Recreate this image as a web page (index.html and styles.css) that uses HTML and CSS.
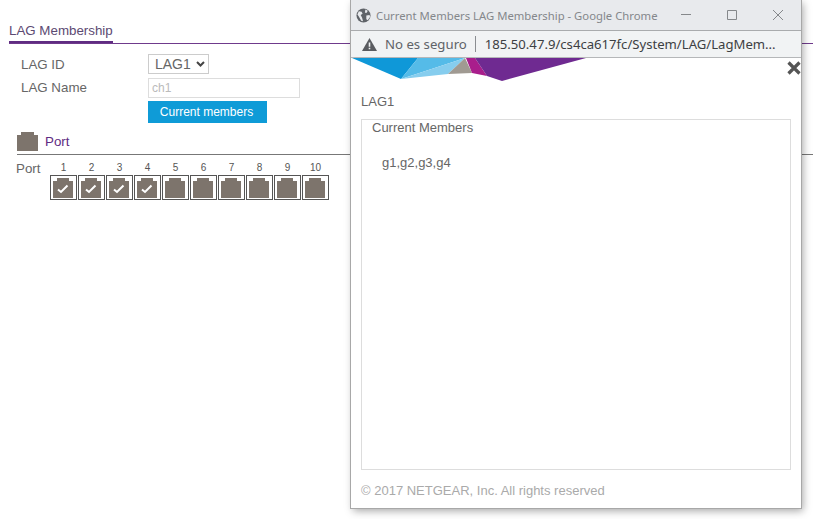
FILE: index.html
```html
<!DOCTYPE html>
<html lang="es">
<head>
<meta charset="utf-8">
<title>LAG Membership</title>
<link rel="stylesheet" href="styles.css">
</head>
<body>
<main class="page">
  <div class="tabbar"><span class="tab">LAG Membership</span></div>
  <div class="form">
    <div class="row row-id">
      <span class="label">LAG ID</span>
      <span class="select">LAG1<svg class="chev" viewBox="0 0 9 6" width="9" height="6"><path d="M1 1l3.500 3.500L8 1" fill="none" stroke="#444" stroke-width="2"/></svg></span>
    </div>
    <div class="row row-name">
      <span class="label">LAG Name</span>
      <span class="input">ch1</span>
    </div>
    <div class="row row-btn">
      <span class="label"></span>
      <span class="button">Current members</span>
    </div>
  </div>
  <div class="section">
    <svg class="port-icon-big" viewBox="0 0 21 19" width="21" height="19"><path d="M0 3h4V0h13v3h4v16H0z" fill="#7d746c"/></svg>
    <span class="section-title">Port</span>
  </div>
  <div class="ports">
    <span class="ports-label">Port</span>
    <div class="port"><span class="num">1</span><span class="box"><svg viewBox="0 0 20 20" width="20" height="20"><path d="M0 3h4V0h12v3h4v17H0z" fill="#7d746c"/><path d="M5 11.500l3 2.500 6.500-6.500" fill="none" stroke="#fff" stroke-width="2"/></svg></span></div>
    <div class="port"><span class="num">2</span><span class="box"><svg viewBox="0 0 20 20" width="20" height="20"><path d="M0 3h4V0h12v3h4v17H0z" fill="#7d746c"/><path d="M5 11.500l3 2.500 6.500-6.500" fill="none" stroke="#fff" stroke-width="2"/></svg></span></div>
    <div class="port"><span class="num">3</span><span class="box"><svg viewBox="0 0 20 20" width="20" height="20"><path d="M0 3h4V0h12v3h4v17H0z" fill="#7d746c"/><path d="M5 11.500l3 2.500 6.500-6.500" fill="none" stroke="#fff" stroke-width="2"/></svg></span></div>
    <div class="port"><span class="num">4</span><span class="box"><svg viewBox="0 0 20 20" width="20" height="20"><path d="M0 3h4V0h12v3h4v17H0z" fill="#7d746c"/><path d="M5 11.500l3 2.500 6.500-6.500" fill="none" stroke="#fff" stroke-width="2"/></svg></span></div>
    <div class="port"><span class="num">5</span><span class="box"><svg viewBox="0 0 20 20" width="20" height="20"><path d="M0 3h4V0h12v3h4v17H0z" fill="#7d746c"/></svg></span></div>
    <div class="port"><span class="num">6</span><span class="box"><svg viewBox="0 0 20 20" width="20" height="20"><path d="M0 3h4V0h12v3h4v17H0z" fill="#7d746c"/></svg></span></div>
    <div class="port"><span class="num">7</span><span class="box"><svg viewBox="0 0 20 20" width="20" height="20"><path d="M0 3h4V0h12v3h4v17H0z" fill="#7d746c"/></svg></span></div>
    <div class="port"><span class="num">8</span><span class="box"><svg viewBox="0 0 20 20" width="20" height="20"><path d="M0 3h4V0h12v3h4v17H0z" fill="#7d746c"/></svg></span></div>
    <div class="port"><span class="num">9</span><span class="box"><svg viewBox="0 0 20 20" width="20" height="20"><path d="M0 3h4V0h12v3h4v17H0z" fill="#7d746c"/></svg></span></div>
    <div class="port"><span class="num">10</span><span class="box"><svg viewBox="0 0 20 20" width="20" height="20"><path d="M0 3h4V0h12v3h4v17H0z" fill="#7d746c"/></svg></span></div>
  </div>
</main>

<section class="popup">
  <header class="titlebar">
    <svg class="globe" viewBox="0 0 16 16" width="15" height="15"><circle cx="8" cy="8" r="7.500" fill="#5f6368"/><path d="M3 3.500l3 .5 1 2-2 1.500 1.500 3 1 3.500-2-.5L3 9 1.500 7zM10 1.500l2.500 1.500-1 2H9.500zM11 8l3.500-.5.5 2-2.500 3.500-1.500-1z" fill="#e8eaed"/></svg>
    <span class="wintitle">Current Members LAG Membership - Google Chrome</span>
    <div class="winbtns">
      <svg viewBox="0 0 12 12" width="12" height="12"><path d="M1 5.500h10" stroke="#85888b" fill="none"/></svg>
      <svg viewBox="0 0 12 12" width="12" height="12"><path d="M1.500 1.500h9v9h-9z" stroke="#85888b" fill="none"/></svg>
      <svg viewBox="0 0 12 12" width="12" height="12"><path d="M1 1l10 10M11 1L1 11" stroke="#85888b" fill="none"/></svg>
    </div>
  </header>
  <div class="addressbar">
    <svg class="warn" viewBox="0 0 15 13" width="15" height="13"><path d="M7.500 0L15 13H0z" fill="#5a5c60"/><path d="M6.700 4.500h1.600v4.300H6.700zM6.700 9.700h1.600v1.500H6.700z" fill="#f1f3f4"/></svg>
    <span class="insecure">No es seguro</span>
    <span class="sep"></span>
    <span class="url">185.50.47.9/cs4ca617fc/System/LAG/LagMem...</span>
  </div>
  <div class="popup-body">
    <svg class="banner" viewBox="0 0 240 24" width="240" height="24"><path d="M1 0h66L50 21z" fill="#0f98d8"/><path d="M67 0h47L50 21z" fill="#55bbe8"/><path d="M114 0L97 16 50 21z" fill="#86cdee"/><path d="M114 0l7 15-24 1z" fill="#a09a92"/><path d="M115 0h9l12 18-15-3z" fill="#a91e8c"/><path d="M124 0h111l-84 23-15-5z" fill="#6f2a91"/></svg>
    <svg class="close" viewBox="0 0 14 14" width="14" height="14"><path d="M1.500 1.500l11 11M12.500 1.500l-11 11" stroke="#555" stroke-width="3.200" fill="none"/></svg>
    <div class="lag-title">LAG1</div>
    <div class="members">
      <div class="members-head">Current Members</div>
      <div class="members-list">g1,g2,g3,g4</div>
    </div>
    <footer class="copy">© 2017 NETGEAR, Inc. All rights reserved</footer>
  </div>
</section>
</body>
</html>
```
FILE: styles.css
```css
html, body {
  margin: 0;
  padding: 0;
  width: 813px;
  height: 519px;
  overflow: hidden;
  background: #fff;
  font-family: "Liberation Sans", Arial, sans-serif;
  color: #666;
}
.page {
  padding: 22px 0 0 9px;
}
.tabbar {
  height: 21px;
  border-bottom: 1px solid #6f3a8c;
}
.tab {
  display: block;
  box-sizing: border-box;
  height: 21px;
  width: 104px;
  border-bottom: 2px solid #5f2c82;
  font-size: 13.33px;
  line-height: 18px;
  color: #5c4a72;
  white-space: nowrap;
}
.form {
  padding: 10px 0 0 12px;
}
.row {
  display: flex;
  align-items: center;
}
.row-id { height: 20px; }
.row-name { height: 20px; margin-top: 4px; }
.row-name .label { padding-bottom: 2px; }
.row-btn { height: 22px; margin-top: 3px; }
.label {
  width: 127px;
  font-size: 13.33px;
  color: #666;
}
.select {
  box-sizing: border-box;
  width: 61px;
  height: 20px;
  border: 1px solid #ccc;
  font-size: 14px;
  line-height: 18px;
  padding-left: 6px;
  display: flex;
  align-items: center;
  gap: 5px;
  color: #666;
}
.input {
  box-sizing: border-box;
  width: 152px;
  height: 20px;
  border: 1px solid #ddd;
  font-size: 12px;
  line-height: 18px;
  padding-left: 3px;
  color: #bbb;
}
.button {
  box-sizing: border-box;
  width: 119px;
  height: 22px;
  padding-right: 2px;
  background: #0f9bd7;
  color: #fff;
  font-size: 12px;
  line-height: 22px;
  text-align: center;
}
.section {
  display: flex;
  align-items: flex-end;
  box-sizing: content-box;
  margin: 8px 0 0 8px;
  height: 20px;
  border-bottom: 1px solid #777;
  padding-bottom: 3px;
}
.section-title {
  margin-left: 7px;
  font-size: 13.33px;
  line-height: 19px;
  color: #5f2c82;
}
.ports {
  display: flex;
  margin: 7px 0 0 7px;
}
.ports-label {
  width: 34px;
  font-size: 13.33px;
  line-height: 13px;
  color: #666;
}
.port {
  width: 28px;
  display: flex;
  flex-direction: column;
}
.num {
  width: 27px;
  text-align: center;
  font-size: 10px;
  line-height: 11px;
  height: 13px;
  color: #555;
}
.box {
  box-sizing: border-box;
  width: 27px;
  height: 25px;
  border: 1px solid #555;
  padding: 2px 0 0 2px;
  display: flex;
  align-items: flex-start;
  justify-content: flex-start;
}
.box svg { display: block; }
.popup {
  position: absolute;
  left: 351px;
  top: 0;
  width: 450px;
  height: 508px;
  background: #fff;
  box-shadow: 0 0 0 1px #a8a8a8, 2px 3px 8px rgba(0,0,0,.35);
  display: flex;
  flex-direction: column;
}
.titlebar {
  height: 30px;
  background: #e8eaed;
  display: flex;
  align-items: center;
  padding-left: 5px;
  border-bottom: 1px solid #a9abad;
}
.globe { flex: none; }
.wintitle {
  margin-left: 5px;
  font-family: "Noto Sans", sans-serif;
  font-size: 11.3px;
  color: #84878b;
  white-space: nowrap;
  flex: 1;
}
.winbtns {
  display: flex;
  gap: 34px;
  padding-right: 17px;
}
.winbtns svg { display: block; }
.addressbar {
  height: 26px;
  background: #f1f3f4;
  display: flex;
  align-items: center;
  padding-left: 11px;
  border-bottom: 1px solid #b5b7b9;
  font-family: "Noto Sans", sans-serif;
}
.warn { flex: none; }
.insecure {
  margin-left: 8px;
  font-size: 13.2px;
  color: #5f6368;
}
.sep {
  width: 1px;
  height: 16px;
  background: #8a8d91;
  margin: 0 9px 0 8px;
}
.url {
  font-size: 13.13px;
  color: #3c4043;
  white-space: nowrap;
}
.popup-body {
  position: relative;
  flex: 1;
  padding: 36px 10px 0;
}
.banner {
  position: absolute;
  left: 0;
  top: 0;
}
.close {
  position: absolute;
  right: 0;
  top: 3px;
}
.lag-title {
  font-size: 13px;
  line-height: 15px;
  color: #666;
}
.members {
  box-sizing: border-box;
  height: 351px;
  margin-top: 10px;
  border: 1px solid #ddd;
  padding-left: 10px;
}
.members-head {
  font-size: 13px;
  line-height: 14px;
  color: #666;
  padding-top: 1px;
}
.members-list {
  margin: 21px 0 0 10px;
  font-size: 13px;
  line-height: 14px;
  color: #666;
}
.copy {
  margin-top: 14px;
  font-size: 13px;
  line-height: 14px;
  color: #aaa;
}
```
